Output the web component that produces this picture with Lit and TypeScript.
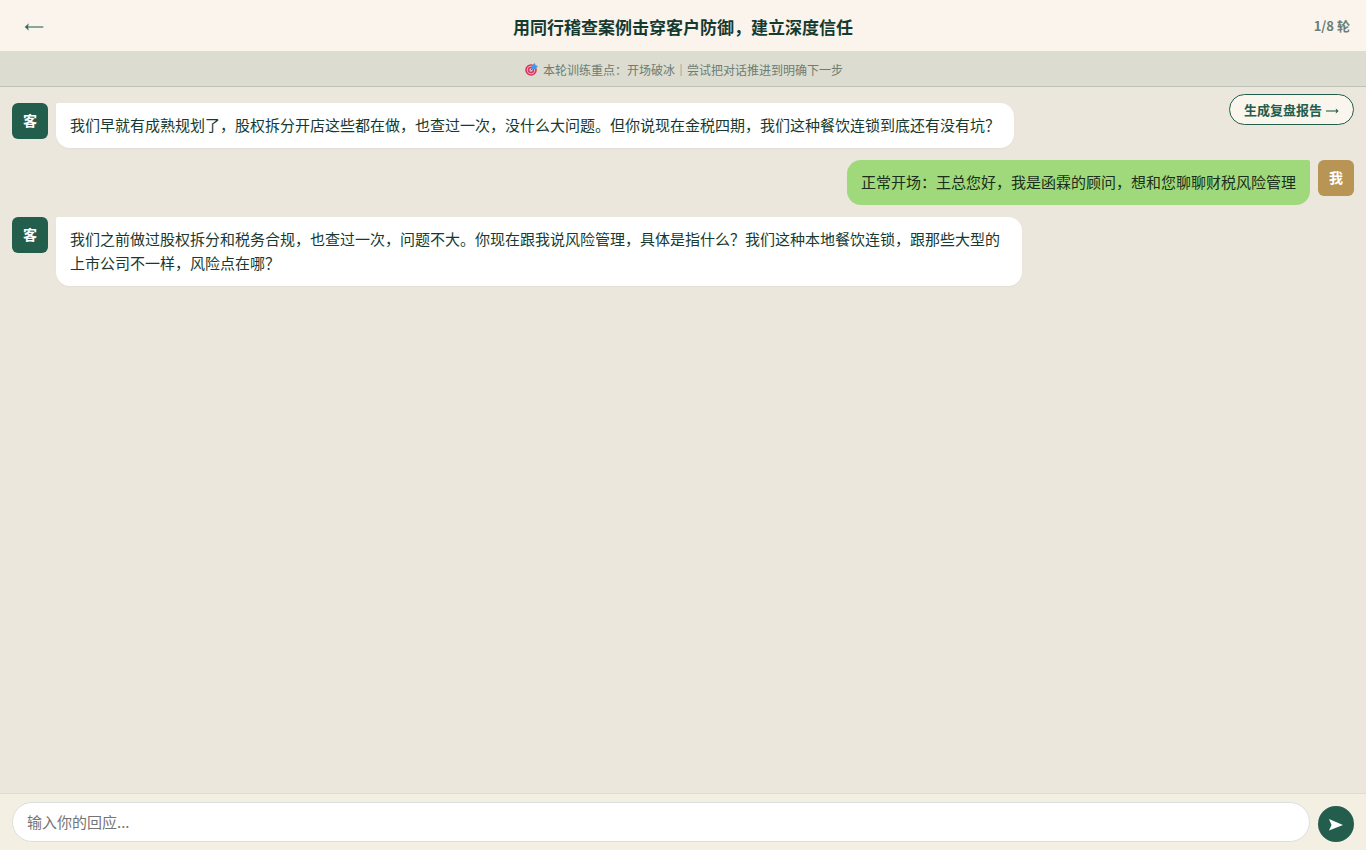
import { LitElement, html, css } from "lit";
import { customElement, property } from "lit/decorators.js";

interface Message {
  from: "client" | "me";
  text: string;
}

const MESSAGES: Message[] = [
  {
    from: "client",
    text: "我们早就有成熟规划了，股权拆分开店这些都在做，也查过一次，没什么大问题。但你说现在金税四期，我们这种餐饮连锁到底还有没有坑？",
  },
  { from: "me", text: "正常开场：王总您好，我是函霖的顾问，想和您聊聊财税风险管理" },
  {
    from: "client",
    text: "我们之前做过股权拆分和税务合规，也查过一次，问题不大。你现在跟我说风险管理，具体是指什么？我们这种本地餐饮连锁，跟那些大型的上市公司不一样，风险点在哪？",
  },
];

@customElement("chat-message")
export class ChatMessage extends LitElement {
  @property({ reflect: true }) from: Message["from"] = "client";
  @property() text = "";

  static styles = css`
    :host {
      display: flex;
      align-items: flex-start;
      gap: 8px;
    }
    :host([from="me"]) {
      flex-direction: row-reverse;
    }
    .avatar {
      box-sizing: border-box;
      flex: none;
      width: 36px;
      height: 36px;
      border-radius: 6px;
      background: #235e4c;
      color: #fff;
      font-size: 14px;
      font-weight: 700;
      line-height: 35px;
      text-align: center;
    }
    .bubble {
      box-sizing: border-box;
      max-width: 72%;
      padding: 9.5px 14px 11.5px;
      border-radius: 2px 14px 14px 14px;
      background: #fff;
      color: #163a30;
      font-size: 15px;
      line-height: 24px;
      box-shadow: 0 1px 2px rgba(0, 0, 0, 0.04);
    }
    :host([from="me"]) .avatar {
      background: #b89555;
    }
    :host([from="me"]) .bubble {
      border-radius: 14px 2px 14px 14px;
      background: #a0d97b;
      color: #1a2e1a;
      box-shadow: none;
    }
  `;

  render() {
    return html`
      <div class="avatar">${this.from === "me" ? "我" : "客"}</div>
      <div class="bubble">${this.text}</div>
    `;
  }
}

@customElement("app-root")
export class AppRoot extends LitElement {
  static styles = css`
    :host {
      display: flex;
      flex-direction: column;
      height: 100vh;
      overflow: hidden;
      position: relative;
      background: #ece7dd;
      font-family: "Noto Sans CJK SC", sans-serif;
      color: #163a30;
    }
    .header {
      box-sizing: border-box;
      flex: none;
      height: 52px;
      display: grid;
      grid-template-columns: 1fr auto 1fr;
      align-items: center;
      padding: 2px 16px 0;
      background: #faf4ed;
      border-bottom: 1px solid #dcdcd0;
    }
    .back {
      display: flex;
      padding: 0 0 0 8px;
      border: 0;
      background: none;
      color: #235e4c;
    }
    .title {
      margin: 0;
      font-size: 17px;
      font-weight: 700;
      line-height: 24px;
    }
    .round {
      justify-self: end;
      padding-bottom: 1px;
      font-size: 13px;
      font-weight: 700;
      line-height: 20px;
      color: #6b7d74;
    }
    .focus {
      box-sizing: border-box;
      flex: none;
      height: 35px;
      display: flex;
      align-items: center;
      justify-content: center;
      gap: 5px;
      padding-left: 2px;
      background: #dcdcd0;
      border-bottom: 1px solid #bdc4b7;
      font-size: 12px;
      color: #6b7d74;
    }
    .messages {
      flex: 1;
      min-height: 0;
      display: flex;
      flex-direction: column;
      gap: 12px;
      padding: 16px 12px;
    }
    .report {
      box-sizing: border-box;
      position: absolute;
      top: 94px;
      right: 12px;
      width: 125px;
      height: 31px;
      display: flex;
      align-items: center;
      justify-content: center;
      gap: 4px;
      padding: 0;
      border: 1px solid #235e4c;
      border-radius: 16px;
      background: #faf6ee;
      color: #235e4c;
      font: 700 13px "Noto Sans CJK SC", sans-serif;
    }
    .composer {
      box-sizing: border-box;
      flex: none;
      height: 57px;
      display: flex;
      align-items: flex-end;
      gap: 8px;
      padding: 8px 12px;
      background: #f3efe3;
      border-top: 1px solid #dfddd0;
    }
    .input {
      box-sizing: border-box;
      flex: 1;
      min-width: 0;
      height: 40px;
      padding: 0 14px 2px;
      border: 1px solid #dbe0dd;
      border-radius: 20px;
      outline: 0;
      background: #fff;
      font: 15px "Noto Sans CJK SC", sans-serif;
      color: #163a30;
    }
    .input::placeholder {
      color: #757575;
    }
    .send {
      flex: none;
      width: 36px;
      height: 36px;
      display: flex;
      align-items: center;
      justify-content: center;
      padding: 0;
      border: 0;
      border-radius: 50%;
      background: #235e4c;
    }
  `;

  render() {
    return html`
      <header class="header">
        <button class="back" aria-label="返回">
          <svg width="20" height="10" viewBox="0 0 20 10">
            <path d="M2 5H19.3" stroke="currentColor" stroke-opacity=".8" stroke-width="1.3" fill="none" />
            <path d="M.7 5 4.8 1.3 4 5 4.8 8.7Z" fill="currentColor" fill-opacity=".85" />
          </svg>
        </button>
        <h1 class="title">用同行稽查案例击穿客户防御，建立深度信任</h1>
        <span class="round">1/8 轮</span>
      </header>
      <div class="focus">
        <svg width="13" height="13" viewBox="0 0 13 13">
          <circle cx="6" cy="7" r="5.8" fill="#d9345f" />
          <circle cx="6" cy="7" r="4.2" fill="#eab6c2" />
          <circle cx="6" cy="7" r="3.2" fill="#d9345f" />
          <circle cx="6" cy="7" r="1.7" fill="#efc2cc" />
          <path d="M5.8 7.2 9.2 3.8" stroke="#40588e" stroke-width="1" />
          <path d="M7 6V2.8L9.7 0 10.6 2.2 13 3 10.3 6Z" fill="#3f9ae8" />
        </svg>
        <span>本轮训练重点：开场破冰｜尝试把对话推进到明确下一步</span>
      </div>
      <main class="messages">
        ${MESSAGES.map((m) => html`<chat-message from=${m.from} .text=${m.text}></chat-message>`)}
      </main>
      <button class="report">
        <span>生成复盘报告</span>
        <svg width="13" height="8" viewBox="0 0 13 8">
          <path d="M0 5H11" stroke="currentColor" stroke-width="1.1" />
          <path d="M12.6 5 9.6 2.2 10.4 5 9.6 7.8Z" fill="currentColor" />
        </svg>
      </button>
      <footer class="composer">
        <input class="input" placeholder="输入你的回应..." />
        <button class="send" aria-label="发送">
          <svg width="16" height="14" viewBox="0 0 16 14">
            <path d="M1 2 15 8 1 13.5 3.5 8Z" fill="#fff" />
          </svg>
        </button>
      </footer>
    `;
  }
}
